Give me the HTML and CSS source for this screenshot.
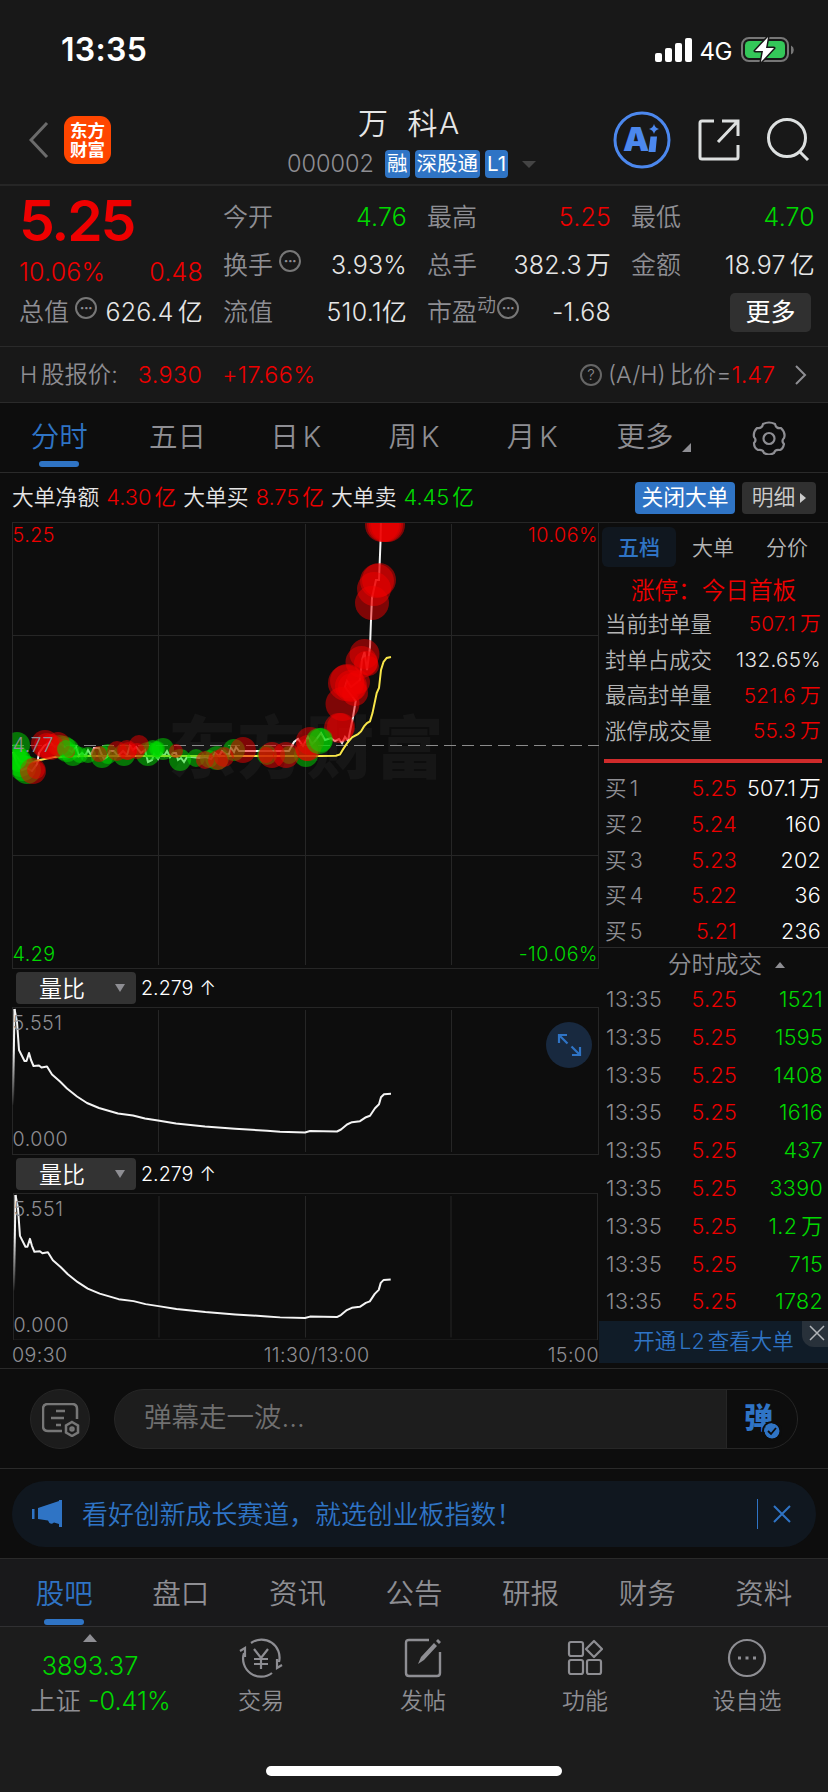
FILE: index.html
```
<!DOCTYPE html>
<html lang="zh-CN">
<head>
	<meta charset="UTF-8">
	<meta name="viewport" content="width=828">
	<title>万 科A 000002</title>
	<link rel="stylesheet" href="styles.css">
</head>
<body>
	<div class="status">
		<span class="clock">13:35</span>
		<div class="status-right">
			<svg width="38" height="24" viewBox="0 0 38 24" fill="#fff"><rect x="0" y="15" width="7" height="9" rx="2"/><rect x="10" y="10" width="7" height="14" rx="2"/><rect x="20" y="5" width="7" height="19" rx="2"/><rect x="30" y="0" width="7" height="24" rx="2"/></svg>
			<span class="net">4G</span>
			<svg width="54" height="28" viewBox="0 0 54 28"><rect x="1" y="2" width="46" height="23" rx="7" fill="none" stroke="#777" stroke-width="2"/><path d="M50 9.500a5 5 0 0 1 0 9z" fill="#777"/><rect x="4" y="5" width="40" height="17" rx="4.500" fill="#34c759"/><path d="M27 1 14 15h8l-2 11 13-14h-8z" fill="#fff" stroke="#181818" stroke-width="3" paint-order="stroke" stroke-linejoin="round"/></svg>
		</div>
	</div>

	<div class="header">
		<svg class="back" width="20" height="36" viewBox="0 0 20 36"><path d="M18 1 2 18l16 17" fill="none" stroke="#6b6b6b" stroke-width="3"/></svg>
		<div class="logo"><span>东方</span><span>财富</span></div>
		<div class="title">
			<div class="name">万 科A</div>
			<div class="code"><span class="num">000002</span><b>融</b><b>深股通</b><b>L1</b><i class="tri-down"></i></div>
		</div>
		<div class="actions">
			<svg width="58" height="58" viewBox="0 0 58 58"><circle cx="29" cy="29" r="27" fill="none" stroke="#4c88ee" stroke-width="3"/><text x="10" y="40" class="ai">A</text><path d="M37.500 25.500h6.500l-1.500 15.500h-7z" fill="#4c88ee"/><path d="M41 13q1 4 5 5-4 1-5 5-1-4-5-5 4-1 5-5z" fill="#4c88ee"/></svg>
			<svg width="42" height="42" viewBox="0 0 42 42" fill="none" stroke="#dde0e0" stroke-width="3"><path d="M16 2H4q-2 0-2 2v34q0 2 2 2h34q2 0 2-2V26M24 2h16v15M39 3 20 23"/></svg>
			<svg width="44" height="44" viewBox="0 0 44 44" fill="none" stroke="#dde0e0" stroke-width="3"><circle cx="21" cy="20" r="18.500"/><path d="m33 33 9 9"/></svg>
		</div>
	</div>

	<div class="quote">
		<div class="col first">
			<div class="price red">5.25</div>
			<div class="row change red"><span>10.06%</span><span>0.48</span></div>
			<div class="row"><label>总值<i class="dots">···</i></label><span>626.4<em>亿</em></span></div>
		</div>
		<div class="col">
			<div class="row"><label>今开</label><span class="green">4.76</span></div>
			<div class="row"><label>换手<i class="dots">···</i></label><span>3.93%</span></div>
			<div class="row"><label>流值</label><span>510.1亿</span></div>
		</div>
		<div class="col">
			<div class="row"><label>最高</label><span class="red">5.25</span></div>
			<div class="row"><label>总手</label><span>382.3<em>万</em></span></div>
			<div class="row"><label>市盈<sup>动</sup><i class="dots near">···</i></label><span>-1.68</span></div>
		</div>
		<div class="col">
			<div class="row"><label>最低</label><span class="green">4.70</span></div>
			<div class="row"><label>金额</label><span>18.97<em>亿</em></span></div>
			<div class="row end"><button class="more">更多</button></div>
		</div>
	</div>

	<div class="hshare">
		<span>H<em>股报价:</em></span><span class="red h1">3.930</span><span class="red h2">+17.66%</span>
		<div class="ratio"><i class="help">?</i><span>(A/H)<em>比价=</em></span><span class="red">1.47</span>
			<svg width="12" height="20" viewBox="0 0 12 20"><path d="m1 1 9 9-9 9" fill="none" stroke="#8e8e93" stroke-width="2"/></svg></div>
	</div>

	<div class="tabs">
		<span class="on">分时</span><span>五日</span><span>日<em>K</em></span><span>周<em>K</em></span><span>月<em>K</em></span><span class="drop">更多</span>
		<span><svg width="34" height="34" viewBox="0 0 34 34" fill="none" stroke="#8e8e93" stroke-width="2.200"><path d="M11 3q6-3 12 0 1 5 6 4 5 5 3 10-3 3 0 6-1 5-4 6-5-1-6 3-5 3-10 0-1-4-6-3-4-2-4-7 3-3 0-6-1-5 3-9 5 1 6-4z" stroke-linejoin="round"/><circle cx="17" cy="17.500" r="5.500"/></svg></span>
	</div>

	<div class="bigorder">
		<span>大单净额</span><span class="red">4.30<em>亿</em></span><span>大单买</span><span class="red">8.75<em>亿</em></span><span>大单卖</span><span class="green">4.45<em>亿</em></span>
		<button class="close-big">关闭大单</button><button class="detail">明细<i></i></button>
	</div>

	<div class="main">
		<div class="left">
			<svg class="chart" width="587" height="447" viewBox="12 522 587 447">
				<defs><clipPath id="area"><rect x="12.500" y="523" width="586" height="446"/></clipPath></defs>
				<text class="mark" x="168" y="773" textLength="276" lengthAdjust="spacing">东方财富</text>
				<path class="grid" d="M12 522.500h587M12 635.500h587M12 855.500h587M12 968.500h587M12.500 522v447M158.500 524v441M305.500 524v441M451.500 524v441M598.500 522v447"/>
				<path d="M12 745.500h587" stroke="#8b8b8b" stroke-dasharray="12 6" fill="none"/>
				<g clip-path="url(#area)" fill="none" stroke-width="2">
					<path stroke="#f4f4f4" d="M13 752l4 12 5 6 5-2 5 3 5-7 2-11 5-7 6-4 5 5 6-3 6 5 5 3 4-5 3 9 3-3 3 3 3-6 3 5 3-7h5l2 5 3 6 3-2 3-6h4l4 5 5-5 4 4 3-9 3 4 3-3 5 6 4-3 3 12 4-2 2-6 4 5 3-6 3 3 3-5 3 6 3-4h3l2 7 3-2 3 4 3-5h5l7 1 7-1 5 2 4-6 4 3 3-5 4 3h3l2-6 3 4 2-5 3 4h50l5-9 4-3 5 7 5-9 4 7 3-3 6-8 4 7 6-2 4 3 4-2 3 4 3-6 3 4 5-24 2.700-16L345 687l2-6 4 6 9-7 2-20 2.500-8 2.500 18 3-23 1-27 1-22 4-18h3l1.500-38 .5-20"/>
					<path stroke="#f8e64a" d="M13 752 20 761l10 2 10-3 14-3 30-1h236.700l15.300-.3 4-1.300 3-5 4-6 5-6 6-3.300 3-2.700 3-5 3-3.300 3-1.700 2.500-8.300L376.700 693l2.300-5 2-18 2.500-8 3.200-4 4.300-1"/>
				</g>
				<g clip-path="url(#area)" class="g">
					<circle cx="17" cy="745" r="13"/><circle cx="15" cy="757" r="13"/><circle cx="19" cy="760" r="12"/><circle cx="20" cy="764" r="13"/><circle cx="23" cy="768" r="13"/><circle cx="27" cy="770" r="14"/>
					<circle cx="60" cy="746" r="11"/><circle cx="64" cy="748" r="12"/><circle cx="67" cy="750" r="12"/><circle cx="73" cy="755" r="11"/><circle cx="80" cy="755" r="8"/><circle cx="88" cy="755" r="8"/><circle cx="102" cy="757" r="11"/><circle cx="108" cy="754" r="10"/><circle cx="124" cy="755" r="11"/>
					<circle cx="148" cy="754" r="12"/><circle cx="153" cy="750" r="10"/><circle cx="157" cy="749" r="8"/><circle cx="163" cy="749" r="11"/><circle cx="180" cy="760" r="11"/><circle cx="196" cy="758" r="9"/><circle cx="209" cy="759" r="9"/><circle cx="217" cy="758" r="12"/><circle cx="234" cy="750" r="11"/><circle cx="267" cy="755" r="10"/><circle cx="289" cy="755" r="9"/><circle cx="306" cy="755" r="12"/>
				</g>
				<g clip-path="url(#area)" class="r">
					<circle cx="33" cy="771" r="13"/><circle cx="36" cy="770" r="9"/><circle cx="45" cy="744" r="14"/><circle cx="47" cy="746" r="13"/><circle cx="51" cy="747" r="13"/><circle cx="58" cy="744" r="12"/><circle cx="69" cy="752" r="6"/><circle cx="99" cy="754" r="8"/><circle cx="117" cy="751" r="10"/><circle cx="127" cy="750" r="10"/><circle cx="128" cy="751" r="9"/><circle cx="139" cy="745" r="10"/><circle cx="137" cy="751" r="8"/><circle cx="176" cy="751" r="7"/><circle cx="205" cy="760" r="9"/><circle cx="218" cy="760" r="10"/><circle cx="224" cy="757" r="10"/><circle cx="243" cy="750" r="13"/><circle cx="266" cy="755" r="8"/><circle cx="272" cy="755" r="13"/><circle cx="286" cy="755" r="13"/><circle cx="308" cy="748" r="13"/><circle cx="310" cy="741" r="14"/><circle cx="307" cy="750" r="11"/>
					<circle cx="339" cy="728" r="15"/><circle cx="341" cy="727" r="14"/><circle cx="342.500" cy="704" r="17"/><circle cx="346" cy="683" r="18"/><circle cx="347" cy="681" r="17"/><circle cx="351" cy="686" r="16"/><circle cx="352" cy="687" r="14"/><circle cx="355" cy="693" r="13"/><circle cx="358" cy="682" r="12"/><circle cx="361.500" cy="662" r="16"/><circle cx="364.500" cy="654" r="15"/><circle cx="366" cy="663" r="12"/><circle cx="369" cy="666" r="10"/><circle cx="372" cy="603" r="17"/><circle cx="374" cy="589" r="17"/><circle cx="377" cy="581" r="17"/><circle cx="379" cy="580" r="17"/><circle cx="382" cy="525" r="17"/><circle cx="384" cy="525" r="17"/><circle cx="386" cy="525" r="17"/><circle cx="388" cy="525" r="17"/>
				</g>
				<g class="g"><circle cx="16" cy="759" r="11" clip-path="url(#area)"/><circle cx="66" cy="749" r="9"/><circle cx="157" cy="749" r="7"/><circle cx="319" cy="741" r="13"/><circle cx="321" cy="740" r="12"/></g>
				<text x="12.500" y="542" class="red">5.25</text><text x="598" y="542" class="red" text-anchor="end">10.06%</text>
				<text x="12.500" y="752" fill="#8e8e93">4.77</text>
				<text x="12.500" y="961" class="green">4.29</text><text x="598" y="961" class="green" text-anchor="end">-10.06%</text>
			</svg>
			<div class="indicator"><button>量比<i></i></button>2.279 <span class="up">↑</span></div>
			<svg class="chart" width="587" height="148" viewBox="12 1007 587 148">
				<defs><linearGradient id="fade" gradientUnits="userSpaceOnUse" x1="0" y1="1050" x2="0" y2="1106"><stop offset="0" stop-color="#f4f4f4"/><stop offset="1" stop-color="#f4f4f4" stop-opacity="0"/></linearGradient></defs>
				<g id="volratio">
					<path class="grid" d="M12 1007.500h587M12 1154.500h587M12.500 1007v148M158.500 1010v142M305.500 1010v142M451.500 1010v142M598.500 1007v148"/>
					<path fill="none" stroke="url(#fade)" stroke-width="2" d="M13 1105l1.500-96"/>
					<path fill="none" stroke="#f4f4f4" stroke-width="2" stroke-linejoin="round" d="M14.500 1009l2.500 13 2 28 5.500 11h2l2.500-8 2 7 2.500 6 5.500-.5 2.500 2 5.500-1 5 8 8 7 7 7 10 8 10 6.500 12 5 19 5.500 15 2 12 3 13 2 18 3 29 3 30 2.300 32 2 13 1 25 .7 5-1.500 27 .5 4-2 6-5 5-2.300 8-1 6-4 4-1.500 5-7.500 4-4 2-7 3-3 7-.5"/>
					<text x="12.500" y="1030" fill="#8e8e93">5.551</text><text x="12.500" y="1146" fill="#8e8e93">0.000</text>
				</g>
				<circle cx="569" cy="1045" r="23" fill="#18293f"/>
				<path d="M559 1043v-8h8M559.500 1035.500l8 8M572 1055h8v-8M579.500 1054.500l-8-8" fill="none" stroke="#2f74c5" stroke-width="2.200"/>
			</svg>
			<div class="indicator"><button>量比<i></i></button>2.279 <span class="up">↑</span></div>
			<svg class="chart" width="587" height="147" viewBox="12 1007 587 147.500"><use href="#volratio"/></svg>
			<div class="axis"><span>09:30</span><span>11:30/13:00</span><span>15:00</span></div>
		</div>

		<div class="right">
			<div class="lvl-tabs"><span class="on">五档</span><span>大单</span><span>分价</span></div>
			<div class="limit red">涨停：今日首板</div>
			<div class="seal"><label>当前封单量</label><span class="red">507.1<em>万</em></span></div>
			<div class="seal"><label>封单占成交</label><span>132.65%</span></div>
			<div class="seal"><label>最高封单量</label><span class="red">521.6<em>万</em></span></div>
			<div class="seal"><label>涨停成交量</label><span class="red">55.3<em>万</em></span></div>
			<div class="redbar"></div>
			<div class="bids">
				<div class="line"><label>买<em>1</em></label><span class="red">5.25</span><span>507.1<em>万</em></span></div>
				<div class="line"><label>买<em>2</em></label><span class="red">5.24</span><span>160</span></div>
				<div class="line"><label>买<em>3</em></label><span class="red">5.23</span><span>202</span></div>
				<div class="line"><label>买<em>4</em></label><span class="red">5.22</span><span>36</span></div>
				<div class="line"><label>买<em>5</em></label><span class="red">5.21</span><span>236</span></div>
			</div>
			<div class="deal-title">分时成交<i></i></div>
			<div class="deals">
				<div class="line"><label>13:35</label><span class="red">5.25</span><span class="green">1521</span></div>
				<div class="line"><label>13:35</label><span class="red">5.25</span><span class="green">1595</span></div>
				<div class="line"><label>13:35</label><span class="red">5.25</span><span class="green">1408</span></div>
				<div class="line"><label>13:35</label><span class="red">5.25</span><span class="green">1616</span></div>
				<div class="line"><label>13:35</label><span class="red">5.25</span><span class="green">437</span></div>
				<div class="line"><label>13:35</label><span class="red">5.25</span><span class="green">3390</span></div>
				<div class="line"><label>13:35</label><span class="red">5.25</span><span class="green">1.2<em>万</em></span></div>
				<div class="line"><label>13:35</label><span class="red">5.25</span><span class="green">715</span></div>
				<div class="line"><label>13:35</label><span class="red">5.25</span><span class="green">1782</span></div>
			</div>
			<div class="l2">开通<em>L2</em><em>查看大单</em>
				<div class="l2-close"><svg width="16" height="16" viewBox="0 0 16 16"><path d="m1 1 14 14M15 1 1 15" stroke="#b0b4b8" stroke-width="1.500"/></svg></div>
			</div>
		</div>
	</div>

	<div class="danmu">
		<div class="note"><svg width="38" height="34" viewBox="0 0 38 34" fill="none" stroke="#777" stroke-width="2.500"><path d="M35 16V6q0-5-5-5H6Q1 1 1 6v17q0 5 5 5h14M14 8h9M9 15h13M14 22h5"/><path d="m30 19 6 3.500v7L30 33l-6-3.500v-7z"/><circle cx="30" cy="26" r="1.500"/></svg></div>
		<div class="input"><span class="hint">弹幕走一波...</span><div class="send">弹<svg width="16" height="16" viewBox="0 0 16 16"><circle cx="8" cy="8" r="7.500" fill="#2f74c5"/><path d="m4 8 3 3 5-6" fill="none" stroke="#0d0d0d" stroke-width="1.800"/></svg></div></div>
	</div>

	<div class="promo-wrap"><div class="promo">
		<svg width="32" height="28" viewBox="0 0 32 28" fill="#2f74c5"><path d="M0 9h2.500v10H0zM6 8l21-7V0h3v27h-3v-3l-5-1.500q-4 3.500-6-2L6 19z"/></svg>
		<span>看好创新成长赛道，就选创业板指数！</span>
		<i class="bar"></i>
		<svg width="18" height="18" viewBox="0 0 18 18"><path d="m1 1 16 16M17 1 1 17" stroke="#2f74c5" stroke-width="2"/></svg>
	</div></div>

	<div class="tabs sub">
		<span class="on">股吧</span><span>盘口</span><span>资讯</span><span>公告</span><span>研报</span><span>财务</span><span>资料</span>
	</div>

	<div class="bottom">
		<div class="index"><i></i><div class="green">3893.37</div><div>上证 <span class="green">-0.41%</span></div></div>
		<div class="item">
			<svg width="44" height="40" viewBox="0 0 44 40" fill="none" stroke="#8e8e93" stroke-width="2.200"><path d="M12 5a18 18 0 0 1 28 19M33 35A18 18 0 0 1 5 15M1 13l5-3v9M43 27l-5 3v-9M15 11l7 9 7-9M22 20v11M15 21h14M15 26h14"/></svg>
			交易</div>
		<div class="item">
			<svg width="38" height="40" viewBox="0 0 38 40" fill="none" stroke="#8e8e93" stroke-width="2.400"><path d="M25 2H5Q2 2 2 5v30q0 3 3 3h28q3 0 3-3V14"/><path d="m14 26 3-7L30 5l3 3-13 14zM32 3l2-2 3 3-2 2z" fill="#8e8e93" stroke="none"/></svg>
			发帖</div>
		<div class="item">
			<svg width="36" height="38" viewBox="0 0 36 38" fill="none" stroke="#8e8e93" stroke-width="2.200"><rect x="2" y="3" width="14" height="14" rx="2"/><rect x="2" y="21" width="14" height="14" rx="2"/><rect x="20" y="21" width="14" height="14" rx="2"/><path d="m27 2 8 8-8 8-8-8z" stroke-linejoin="round"/></svg>
			功能</div>
		<div class="item">
			<svg width="40" height="40" viewBox="0 0 40 40" fill="none" stroke="#8e8e93" stroke-width="2.200"><circle cx="20" cy="20" r="18"/><path d="M11 20h3M18.500 20h3M26 20h3" stroke-width="3"/></svg>
			设自选</div>
	</div>
	<div class="home"><i></i></div>
</body>
</html>
```
FILE: styles.css
```
* {
	box-sizing: border-box;
}
body {
	margin: 0;
	width: 828px;
	height: 1792px;
	overflow: hidden;
	background: #0d0d0d;
	color: #e6e6e6;
	font: 350 24px/1 Inter, "Noto Sans CJK SC", sans-serif;
	white-space: nowrap;
}
svg {
	display: block;
	flex: none;
}
i, em {
	font-style: normal;
}
em {
	margin-left: 4px;
}
button {
	border: 0;
	padding: 0;
	font: inherit;
	color: #fff;
}
.red {
	color: #ee0000;
	fill: #ee0000;
}
.green {
	color: #00d800;
	fill: #00d800;
}

/* status bar */
.status {
	height: 94px;
	padding: 5px 33px 0 61px;
	background: #181818;
	display: flex;
	align-items: center;
	justify-content: space-between;
}
.clock {
	color: #fff;
	font-size: 32px;
	font-weight: 600;
	letter-spacing: 0.3px;
}
.status-right {
	display: flex;
	align-items: center;
	margin-top: 1px;
}
.net {
	margin: 3px 9px 0 7px;
	font-size: 24px;
	font-weight: 400;
	color: #fff;
	letter-spacing: -0.5px;
}

/* header */
.header {
	height: 92px;
	padding: 2px 0 0 29px;
	background: #181818;
	border-bottom: 2px solid #262626;
	display: flex;
	align-items: center;
}
.logo {
	width: 47px;
	height: 48px;
	margin-left: 15px;
	border-radius: 11px;
	background: #ff4600;
	color: #fff;
	font-size: 17.5px;
	font-weight: 700;
	line-height: 19px;
	display: flex;
	flex-direction: column;
	align-items: center;
	justify-content: center;
}
.title {
	width: 252px;
	margin-left: 176px;
}
.name {
	height: 48px;
	padding-left: 71px;
	font-size: 30px;
	line-height: 46px;
	letter-spacing: 1.5px;
	word-spacing: 8px;
}
.code {
	display: flex;
	align-items: center;
	height: 32px;
	color: #8e8e93;
}
.code .num {
	width: 93px;
	font-size: 23.5px;
}
.code b {
	height: 28px;
	margin-left: 5px;
	padding: 0 2px;
	border-radius: 4px;
	background: #2f74c5;
	color: #fff;
	font-size: 20.5px;
	font-weight: 400;
	line-height: 27px;
}
.tri-down {
	margin-left: 14px;
	border: 7px solid transparent;
	border-top-color: #444;
	border-bottom: 0;
}
.actions {
	margin-left: 74px;
	display: flex;
	align-items: center;
	gap: 27px;
}
.actions svg:last-child {
	margin-left: -1px;
}
.ai {
	font: 900 33px Inter, sans-serif;
	fill: #4c88ee;
}

/* quote numbers */
.quote {
	height: 161px;
	padding: 8px 13px 0 19px;
	background: #181818;
	border-bottom: 1px solid #2a2a2a;
	display: grid;
	grid-template-columns: repeat(4, 184px);
	column-gap: 20px;
}
.row {
	display: flex;
	align-items: center;
	justify-content: space-between;
	height: 47.5px;
	font-size: 25px;
}
.row label {
	position: relative;
	display: flex;
	align-items: center;
	color: #8e8e93;
}
.row span {
	letter-spacing: 0.2px;
}
.dots {
	width: 22px;
	height: 22px;
	margin: -9px 0 0 6px;
	border: 2px solid #777;
	border-radius: 50%;
	font-size: 14px;
	font-weight: 700;
	line-height: 17px;
	text-align: center;
	letter-spacing: -0.5px;
}
.dots.near {
	margin-left: 1px;
}
.row sup {
	margin-top: -14px;
	font-size: 19px;
	line-height: 1;
}
.price {
	height: 55px;
	font-size: 57px;
	font-weight: 600;
	line-height: 54px;
	letter-spacing: -2.2px;
}
.row.change {
	height: 40px;
	padding-top: 7px;
}
.row.end {
	justify-content: flex-end;
}
.more {
	width: 81px;
	height: 39px;
	margin-right: 4px;
	border-radius: 5px;
	background: #303030;
	font-weight: 400;
}

/* H share */
.hshare {
	height: 56px;
	padding: 1px 21px 0 20px;
	background: #181818;
	border-bottom: 1px solid #2a2a2a;
	display: flex;
	align-items: center;
	color: #8e8e93;
	font-size: 23.3px;
}
.h1 {
	margin-left: 20px;
	letter-spacing: 0.4px;
}
.h2 {
	margin-left: 20px;
	letter-spacing: 0.4px;
}
.ratio {
	margin-left: auto;
	display: flex;
	align-items: center;
}
.ratio svg {
	margin-left: 20px;
}
.help {
	width: 22px;
	height: 22px;
	margin-right: 6px;
	border: 2px solid #666;
	border-radius: 50%;
	font-size: 15px;
	line-height: 18px;
	text-align: center;
}

/* tabs */
.tabs {
	height: 70px;
	border-bottom: 1px solid #2a2a2a;
	display: grid;
	grid-template-columns: repeat(7, 1fr);
	color: #8e8e93;
	font-size: 28.5px;
}
.tabs span {
	position: relative;
	display: flex;
	align-items: center;
	justify-content: center;
}
.tabs .on {
	color: #2f74c5;
}
.tabs .on::after {
	content: "";
	position: absolute;
	left: calc(50% - 20px);
	bottom: 5px;
	width: 40px;
	height: 6px;
	border-radius: 3px;
	background: #2f74c5;
}
.tabs .drop {
	padding-left: 6px;
}
.tabs .drop::after {
	content: "";
	margin: 20px 0 0 8px;
	border-left: 9px solid transparent;
	border-bottom: 9px solid #8e8e93;
}

/* big orders */
.bigorder {
	height: 49px;
	padding: 0 12px;
	display: flex;
	align-items: center;
	gap: 7px;
	font-size: 21.8px;
}
.bigorder em {
	margin-left: 3px;
}
.close-big {
	width: 100px;
	height: 32px;
	margin-left: auto;
	border-radius: 4px;
	background: #2f74c5;
	font-weight: 400;
}
.detail {
	width: 74px;
	height: 32px;
	border-radius: 4px;
	background: #303030;
	color: #ccc;
	display: flex;
	align-items: center;
	justify-content: center;
}
.detail i {
	margin-left: 5px;
	border: 5px solid transparent;
	border-left: 6px solid #ccc;
	border-right: 0;
}

/* charts */
.main {
	height: 847px;
	border-bottom: 1px solid #2a2a2a;
	display: flex;
}
.left {
	width: 587px;
	margin-left: 12px;
}
.chart text {
	font: 350 19.7px Inter, sans-serif;
	letter-spacing: 0.5px;
}
.chart .mark {
	font: 900 68px "Noto Sans CJK SC", sans-serif;
	fill: #161616;
}
.grid {
	fill: none;
	stroke: #262626;
}
.r {
	fill: rgba(240, 0, 0, 0.5);
}
.g {
	fill: rgba(0, 220, 0, 0.5);
}
.indicator {
	height: 38px;
	padding: 1px 0 0 4px;
	display: flex;
	align-items: center;
	color: #fff;
	font-size: 19.7px;
}
.indicator button {
	width: 120px;
	height: 32px;
	margin: -1px 5px 0 0;
	padding: 2px 11px 0 23px;
	border-radius: 4px;
	background: #333;
	display: flex;
	align-items: center;
	justify-content: space-between;
	font-size: 23px;
}
.indicator i {
	margin-top: -2px;
	border: 5px solid transparent;
	border-top: 8px solid #8e8e93;
	border-bottom: 0;
}
.up {
	margin-left: 6px;
}
.axis {
	height: 30px;
	padding-top: 2px;
	display: flex;
	align-items: center;
	justify-content: space-between;
	color: #8e8e93;
	font-size: 19.7px;
	letter-spacing: 0.4px;
}
.axis span:nth-child(2) {
	margin-left: 18px;
}

/* order book */
.right {
	width: 229px;
	border-top: 1px solid #262626;
	display: flex;
	flex-direction: column;
}
.lvl-tabs {
	height: 49px;
	padding: 4px 3px 4px;
	display: grid;
	grid-template-columns: repeat(3, 74px);
	color: #b4b4b4;
	font-size: 21px;
	line-height: 42px;
	text-align: center;
}
.lvl-tabs .on {
	height: 40px;
	border-radius: 6px;
	background: #10171f;
	color: #2f74c5;
	font-weight: 500;
}
.limit {
	height: 35px;
	font-size: 23.6px;
	line-height: 37px;
	text-align: center;
}
.seal {
	height: 35.6px;
	padding: 0 7px 0 6px;
	display: flex;
	align-items: center;
	justify-content: space-between;
	font-size: 21.4px;
}
.seal span {
	font-size: 20.7px;
	letter-spacing: 0.3px;
}
.seal label {
	color: #b4b4b4;
}
.redbar {
	height: 4px;
	margin: 10px 6px 7px 5px;
	background: #cf2b2b;
}
.line {
	height: 35.6px;
	padding: 2px 7px 0 6px;
	display: grid;
	grid-template-columns: 54px 78px 1fr;
	align-items: center;
	color: #fff;
	font-size: 21.5px;
	letter-spacing: 0.3px;
}
.line label {
	color: #8e8e93;
}
.line span {
	text-align: right;
	justify-self: end;
}
.bids {
	height: 178px;
}
.bids .line em {
	margin-left: 3px;
}
.deal-title {
	height: 34px;
	margin-top: -1px;
	padding-left: 69px;
	border-top: 1px solid #2a2a2a;
	display: flex;
	align-items: center;
	color: #8e8e93;
	font-size: 23.5px;
}
.deal-title i {
	margin-left: 13px;
	border: 5px solid transparent;
	border-bottom: 6px solid #8e8e93;
	border-top: 0;
}
.deals {
	height: 340px;
}
.deals .line {
	height: 37.8px;
	padding: 0 5px 1px 7px;
	grid-template-columns: 56px 75px 1fr;
}
.deals label {
	letter-spacing: 0.6px;
}
.l2 {
	position: relative;
	height: 42px;
	background: #101c28;
	color: #2f74c5;
	font-size: 21.5px;
	line-height: 40px;
	text-align: center;
}
.l2 em {
	margin-left: 3px;
}
.l2-close {
	position: absolute;
	top: 0;
	right: 0;
	width: 26px;
	height: 26px;
	padding: 4px 0 0 7px;
	border-bottom-left-radius: 12px;
	background: #28313a;
}

/* comment input */
.danmu {
	height: 100px;
	padding: 0 30px;
	border-bottom: 1px solid #2a2a2a;
	display: flex;
	align-items: center;
	justify-content: space-between;
}
.note {
	width: 60px;
	height: 60px;
	padding: 3px 0 0 2px;
	border: 1px solid #262626;
	border-radius: 50%;
	background: #1c1c1c;
	display: flex;
	align-items: center;
	justify-content: center;
}
.input {
	width: 684px;
	height: 60px;
	border: 1px solid #262626;
	border-radius: 30px;
	background: #1d1d1d;
	overflow: hidden;
	display: flex;
	justify-content: space-between;
}
.hint {
	padding-left: 29px;
	color: #707070;
	font-size: 27.5px;
	line-height: 55px;
}
.send {
	position: relative;
	width: 71px;
	padding-left: 17px;
	border-left: 1px solid #262626;
	background: #0d0d0d;
	color: #2f74c5;
	font-size: 29px;
	font-weight: 900;
	line-height: 58px;
}
.send svg {
	position: absolute;
	left: 37px;
	top: 33px;
	border-radius: 50%;
	box-shadow: 0 0 0 2px #0d0d0d;
}

/* promo */
.promo-wrap {
	height: 90px;
	padding: 12px 12px 0;
	border-bottom: 1px solid #2a2a2a;
}
.promo {
	height: 66px;
	padding: 0 25px 0 20px;
	border-radius: 33px;
	background: #10171f;
	color: #2f74c5;
	display: flex;
	align-items: center;
	font-size: 25.9px;
}
.promo span {
	margin: 1px 0 0 18px;
}
.promo .bar {
	width: 1px;
	height: 30px;
	margin: 0 15px 0 auto;
	background: #2f74c5;
}

/* lower tabs and toolbar */
.tabs.sub {
	height: 68px;
	padding: 0 6px;
	background: #19191b;
	border-bottom: 1px solid #303032;
}
.tabs.sub span {
	padding-top: 3px;
}
.tabs.sub .on::after {
	bottom: 1px;
}
.bottom {
	height: 139px;
	background: #1c1c1c;
	display: grid;
	grid-template-columns: 180px repeat(4, 162px);
	color: #8e8e93;
	text-align: center;
}
.index {
	display: flex;
	flex-direction: column;
	align-items: center;
	font-size: 25.3px;
	line-height: 35px;
}
.index i {
	margin: 7px 0 6px;
	border: 7px solid transparent;
	border-top: 0;
	border-bottom: 8px solid #8e8e93;
}
.index div:last-child {
	margin-left: 21px;
}
.item {
	padding-top: 11px;
	display: flex;
	flex-direction: column;
	align-items: center;
	font-size: 23px;
	line-height: 24px;
}
.item svg {
	height: 40px;
	margin-bottom: 11px;
}
.home {
	height: 28px;
	background: #1c1c1c;
}
.home i {
	display: block;
	width: 296px;
	height: 10px;
	margin: 0 auto;
	border-radius: 5px;
	background: #fff;
}
```
